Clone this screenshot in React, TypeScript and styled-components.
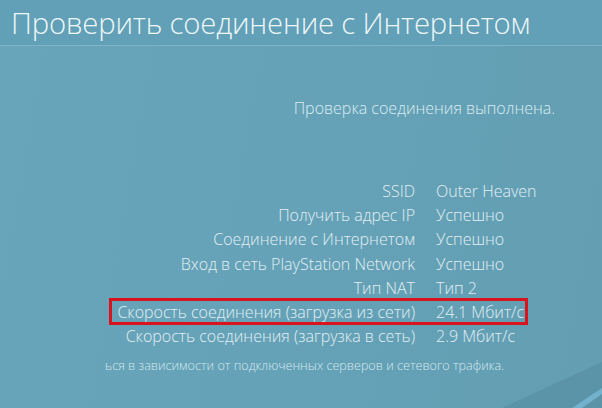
import styled, { createGlobalStyle } from "styled-components";

const GlobalStyle = createGlobalStyle`
  html, body {
    margin: 0;
    padding: 0;
  }
  body {
    font-family: "Open Sans", "DejaVu Sans", sans-serif;
    background: #64a1b6;
  }
`

const Screen = styled.div`
  position: relative;
  width: 602px;
  height: 408px;
  overflow: hidden;
  background: linear-gradient(100deg, #68a5ba 0%, #65a2b7 55%, #639eb2 100%);
  color: #e4f1f5;
`

const Header = styled.header`
  height: 45px;
  border-bottom: 1px solid #7fb3c5;
  background: #61a0b6;
  display: flex;
  align-items: center;
  padding-left: 11px;
`

const Title = styled.h1`
  margin: 0;
  font-size: 29.3px;
  font-weight: 300;
  color: #eef7fa;
  letter-spacing: -0.2px;
  white-space: nowrap;
`

const Status = styled.div`
  margin-top: 51px;
  padding-right: 47px;
  text-align: right;
  font-size: 16px;
  font-weight: 300;
  color: #dcecf2;
`

const List = styled.div`
  margin: 60px 0 0 110px;
  width: 418px;
  display: flex;
  flex-direction: column;
`

const Row = styled.div<{ $active?: boolean }>`
  position: relative;
  display: grid;
  grid-template-columns: 1fr 92px;
  column-gap: 21px;
  height: 24.2px;
  align-items: center;
  font-size: 16px;
  font-weight: 300;
  white-space: nowrap;
  color: #e2eff4;

  &::after {
    content: "";
    display: ${p => (p.$active ? "block" : "none")};
    position: absolute;
    inset: -2px 0 -1px -1px;
    border: 3px solid #d9141c;
  }
`

const Label = styled.span`
  text-align: right;
`

const Value = styled.span`
  text-align: left;
`

const Note = styled.div`
  margin: 9px 0 0 105px;
  font-size: 12.6px;
  font-weight: 300;
  color: #d4e7ee;
  white-space: nowrap;
`

const Corner = styled.svg`
  position: absolute;
  right: 0;
  bottom: 0;
`

const rows = [
  ["SSID", "Outer Heaven"],
  ["Получить адрес IP", "Успешно"],
  ["Соединение с Интернетом", "Успешно"],
  ["Вход в сеть PlayStation Network", "Успешно"],
  ["Тип NAT", "Тип 2"],
  ["Скорость соединения (загрузка из сети)", "24.1 Мбит/с"],
  ["Скорость соединения (загрузка в сеть)", "2.9 Мбит/с"],
]

export default function App() {
  return (
    <>
      <GlobalStyle />
      <Screen>
        <Header>
          <Title>Проверить соединение с Интернетом</Title>
        </Header>
        <Status>Проверка соединения выполнена.</Status>
        <List>
          {rows.map(([label, value], i) => (
            <Row key={label} $active={i === 5}>
              <Label>{label}</Label>
              <Value>{value}</Value>
            </Row>
          ))}
        </List>
        <Note>ься в зависимости от подключенных серверов и сетевого трафика.</Note>
        <Corner width="100" height="50" viewBox="0 0 100 50">
          <polygon points="0,50 100,4 100,50" fill="#5b93a8" />
          <polygon points="70,50 100,30 100,36 80,50" fill="#72b2cc" />
        </Corner>
      </Screen>
    </>
  )
}
